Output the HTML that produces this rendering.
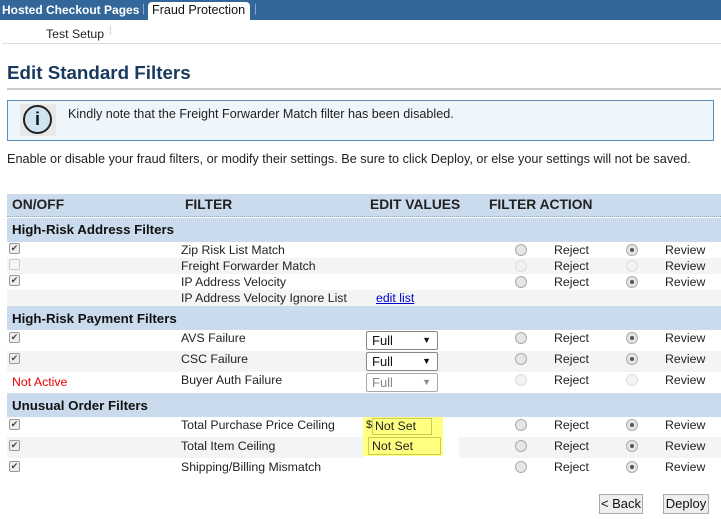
<!DOCTYPE html>
<html><head><style>
*{margin:0;padding:0;box-sizing:border-box}
body{width:721px;height:519px;background:#fff;font-family:"Liberation Sans",Arial,sans-serif;font-size:12.3px;color:#222;position:relative;overflow:hidden}
.a{position:absolute;white-space:nowrap}
.bar{position:absolute;left:0;width:721px}
.sec{background:#c9dbec;font-weight:bold;font-size:13.3px;color:#111}
.cb{position:absolute;left:9px;width:11px;height:11px;border:1px solid #999;border-radius:2px;background:#eee;font-size:9px;line-height:9px;text-align:center;color:#444}
.rd{position:absolute;width:12px;height:12px;border:1px solid #aaa;border-radius:50%;background:#e6e6e6}
.rd.on::after{content:"";position:absolute;left:3px;top:3px;width:4px;height:4px;border-radius:50%;background:#555}
.rd.dis{border-color:#ddd;background:#f2f2f2}
.sel{position:absolute;left:366px;width:72px;height:19px;border:1px solid #888;border-radius:2px;background:#fff;font-size:13px;padding-left:5px;line-height:17px;color:#111}
.sel span{position:absolute;right:6px;font-size:9px}
.btn{position:absolute;height:20px;border:1px solid #aaa;background:#eee;font-size:13px;line-height:18px;text-align:center;color:#111}
.h{font-weight:bold;font-size:13.8px}
</style></head><body>
<div class="bar" style="top:0;height:20px;background:#336699"></div>
<div class="a" style="left:2px;top:3px;color:#fff;font-weight:bold;font-size:12px">Hosted Checkout Pages</div>
<div class="a" style="left:142px;top:3px;color:#aac;font-size:11px">|</div>
<div class="a" style="left:148px;top:2px;width:102px;height:19px;background:#fff;border-radius:4px 4px 0 0"></div>
<div class="a" style="left:152px;top:3px;color:#111;font-size:12.6px">Fraud Protection</div>
<div class="a" style="left:254px;top:3px;color:#aac;font-size:11px">|</div>
<div class="a" style="left:46px;top:27px;font-size:12.3px">Test Setup</div>
<div class="a" style="left:109px;top:25px;color:#ccc;font-size:10px">|</div>
<div class="bar" style="top:43px;height:1px;background:#ddd;left:2px"></div>
<div class="a" style="left:7px;top:62px;font-size:18.8px;font-weight:bold;color:#183a5e">Edit Standard Filters</div>
<div class="a" style="left:7px;top:88px;width:714px;height:2px;background:#ccc"></div>
<div class="a" style="left:7px;top:100px;width:707px;height:41px;background:#eef5fb;border:1px solid #5c8cb8"></div>
<div class="a" style="left:20px;top:104px;width:36px;height:32px;background:#e8e8e8"></div>
<div class="a" style="left:23px;top:105px;width:29px;height:29px;border:2.5px solid #222;border-radius:50%;background:#cfe3f0;text-align:center;font-weight:bold;font-size:18px;line-height:24px;color:#111">i</div>
<div class="a" style="left:68px;top:107px;font-size:12.6px">Kindly note that the Freight Forwarder Match filter has been disabled.</div>
<div class="a" style="left:7px;top:152px;font-size:12.7px">Enable or disable your fraud filters, or modify their settings. Be sure to click Deploy, or else your settings will not be saved.</div>

<div class="a sec" style="left:7px;top:194px;width:714px;height:23px;border-bottom:1px dotted #8aa"></div>
<div class="a h" style="left:12px;top:197px">ON/OFF</div>
<div class="a h" style="left:185px;top:197px">FILTER</div>
<div class="a h" style="left:370px;top:197px">EDIT VALUES</div>
<div class="a h" style="left:489px;top:197px">FILTER ACTION</div>
<div class="a sec" style="left:7px;top:218px;width:714px;height:24px;padding:4px 5px">High-Risk Address Filters</div>
<div class="a" style="left:7px;top:258px;width:714px;height:16px;background:#f4f4f4"></div>
<div class="a" style="left:7px;top:290px;width:714px;height:16px;background:#f4f4f4"></div>
<div class="cb" style="top:243px">✔</div><div class="a" style="left:181px;top:243px">Zip Risk List Match</div>
<div class="cb" style="top:259px;border-color:#ccc;background:#f6f6f6"></div><div class="a" style="left:181px;top:259px">Freight Forwarder Match</div>
<div class="cb" style="top:275px">✔</div><div class="a" style="left:181px;top:275px">IP Address Velocity</div>
<div class="a" style="left:181px;top:291px">IP Address Velocity Ignore List</div>
<div class="a" style="left:376px;top:291px;color:#00c;text-decoration:underline">edit list</div>
<div class="rd" style="left:515px;top:244px"></div><div class="a" style="left:554px;top:243px">Reject</div><div class="rd on" style="left:626px;top:244px"></div><div class="a" style="left:665px;top:243px">Review</div>
<div class="rd dis" style="left:515px;top:260px"></div><div class="a" style="left:554px;top:259px">Reject</div><div class="rd dis" style="left:626px;top:260px"></div><div class="a" style="left:665px;top:259px">Review</div>
<div class="rd" style="left:515px;top:276px"></div><div class="a" style="left:554px;top:275px">Reject</div><div class="rd on" style="left:626px;top:276px"></div><div class="a" style="left:665px;top:275px">Review</div>

<div class="a sec" style="left:7px;top:306px;width:714px;height:24px;padding:5px 5px">High-Risk Payment Filters</div>
<div class="a" style="left:7px;top:351px;width:714px;height:21px;background:#f4f4f4"></div>
<div class="cb" style="top:332px">✔</div><div class="a" style="left:181px;top:331px">AVS Failure</div>
<div class="sel" style="top:331px">Full<span>▼</span></div>
<div class="cb" style="top:353px">✔</div><div class="a" style="left:181px;top:352px">CSC Failure</div>
<div class="sel" style="top:352px">Full<span>▼</span></div>
<div class="a" style="left:12px;top:375px;color:#e00;font-size:12.3px">Not Active</div><div class="a" style="left:181px;top:373px">Buyer Auth Failure</div>
<div class="sel" style="top:373px;color:#888;border-color:#aaa">Full<span>▼</span></div>
<div class="rd" style="left:515px;top:332px"></div><div class="a" style="left:554px;top:331px">Reject</div><div class="rd on" style="left:626px;top:332px"></div><div class="a" style="left:665px;top:331px">Review</div>
<div class="rd" style="left:515px;top:353px"></div><div class="a" style="left:554px;top:352px">Reject</div><div class="rd on" style="left:626px;top:353px"></div><div class="a" style="left:665px;top:352px">Review</div>
<div class="rd dis" style="left:515px;top:374px"></div><div class="a" style="left:554px;top:373px">Reject</div><div class="rd dis" style="left:626px;top:374px"></div><div class="a" style="left:665px;top:373px">Review</div>

<div class="a sec" style="left:7px;top:393px;width:714px;height:24px;padding:5px 5px">Unusual Order Filters</div>
<div class="a" style="left:7px;top:437px;width:714px;height:21px;background:#f4f4f4"></div>
<div class="a" style="left:363px;top:417px;width:96px;height:41px;background:#fff"></div>
<div class="a" style="left:363px;top:417px;width:80px;height:39px;background:#ffff80"></div>
<div class="a" style="left:366px;top:419px;font-size:11px">$</div>
<div class="a" style="left:372px;top:418px;width:60px;height:17px;border:1px solid #cc5;padding-left:2px;font-size:12.3px;line-height:15px">Not Set</div>
<div class="a" style="left:368px;top:437px;width:73px;height:18px;border:1px solid #cc5;padding-left:3px;font-size:12.3px;line-height:16px">Not Set</div>
<div class="cb" style="top:419px">✔</div><div class="a" style="left:181px;top:418px">Total Purchase Price Ceiling</div>
<div class="cb" style="top:440px">✔</div><div class="a" style="left:181px;top:439px">Total Item Ceiling</div>
<div class="cb" style="top:461px">✔</div><div class="a" style="left:181px;top:460px">Shipping/Billing Mismatch</div>
<div class="rd" style="left:515px;top:419px"></div><div class="a" style="left:554px;top:418px">Reject</div><div class="rd on" style="left:626px;top:419px"></div><div class="a" style="left:665px;top:418px">Review</div>
<div class="rd" style="left:515px;top:440px"></div><div class="a" style="left:554px;top:439px">Reject</div><div class="rd on" style="left:626px;top:440px"></div><div class="a" style="left:665px;top:439px">Review</div>
<div class="rd" style="left:515px;top:461px"></div><div class="a" style="left:554px;top:460px">Reject</div><div class="rd on" style="left:626px;top:461px"></div><div class="a" style="left:665px;top:460px">Review</div>

<div class="btn" style="left:599px;top:494px;width:44px">&lt; Back</div>
<div class="btn" style="left:663px;top:494px;width:46px">Deploy</div>
</body></html>
